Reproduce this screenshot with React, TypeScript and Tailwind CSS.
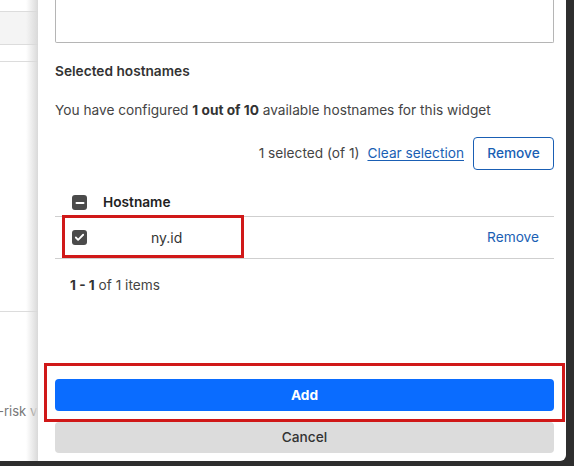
import { Check, Minus } from 'lucide-react'

function Box({ checked }: { checked: boolean }) {
  return (
    <span className="flex h-[15px] w-[15px] items-center justify-center rounded-[3px] bg-[#4b4b4b]">
      {checked ? (
        <Check className="h-[11px] w-[11px] text-white" strokeWidth={4} />
      ) : (
        <Minus className="h-[12px] w-[12px] text-white" strokeWidth={4} />
      )}
    </span>
  )
}

export default function App() {
  return (
    <div
      className="flex h-[466px] w-[574px] flex-col overflow-hidden bg-[#2e2e2e] text-[13.7px] text-[#333]"
      style={{ fontFamily: 'Inter, "Noto Sans", sans-serif' }}
    >
      <div className="flex h-[461px]">
        {/* page behind the drawer */}
        <div className="relative flex w-[38px] flex-col bg-white">
          <div className="mt-[11px] h-[34px] border-y border-[#dcdcdc] bg-[#f4f4f4]" />
          <div className="mt-[16px] border-t border-[#dcdcdc]" />
          <div className="mt-[249px] border-t border-[#dcdcdc]" />
          <div className="mt-[90px] whitespace-nowrap text-[13px] text-[#777] -ml-[2px]">-risk v</div>
          <div className="absolute inset-y-0 right-0 w-[12px] bg-gradient-to-r from-transparent to-[#d9d9d9]" />
        </div>

        {/* drawer */}
        <div className="relative flex w-[528px] flex-col rounded-br-[6px] bg-white pl-[17px] pr-[12px]">
          <div className="h-[43px] rounded-b-[2px] border-x border-b border-[#b5b5b5]" />

          <div className="mt-[18px] font-semibold text-[#333]">Selected hostnames</div>

          <p className="mt-[18px] text-[#444]">
            You have configured <span className="font-bold text-[#333]">1 out of 10</span> available hostnames for this widget
          </p>

          <div className="mt-[17px] flex items-center justify-end gap-[8px]">
            <span className="text-[#444]">1 selected (of 1)</span>
            <span className="mr-[1px] text-[#1a5fb4] underline underline-offset-2">Clear selection</span>
            <button className="h-[33px] w-[81px] rounded-[4px] border border-[#1a5fb4] font-medium text-[#1a5fb4]">
              Remove
            </button>
          </div>

          <div className="mt-[24px] flex h-[23px] items-center border-b border-[#cfcfcf] pb-[5px] pl-[17px]">
            <Box checked={false} />
            <span className="ml-[16px] font-semibold text-[#222]">Hostname</span>
          </div>

          <div className="flex h-[42px] items-center border-b border-[#cfcfcf] pl-[17px] pr-[15px]">
            <Box checked={true} />
            <span className="ml-[64px] text-[14px] text-[#333]">ny.id</span>
            <span className="ml-auto text-[#1a5fb4]">Remove</span>
          </div>

          <div className="mt-[16px] pl-[15px] text-[#444]">
            <span className="font-bold text-[#333]">1 - 1</span> of 1 items
          </div>

          <div className="mt-auto mb-[8px] flex flex-col gap-[11px]">
            <button className="h-[32px] w-full rounded-[4px] bg-[#0a6cff] font-bold text-white">Add</button>
            <button className="h-[31px] w-full rounded-[4px] bg-[#dcdcdc] font-medium text-[#333]">Cancel</button>
          </div>

          {/* annotation boxes */}
          <div className="pointer-events-none absolute left-[24px] top-[215px] h-[43px] w-[182px] border-[3px] border-[#d01818]" />
          <div className="pointer-events-none absolute left-[6px] top-[363px] h-[59px] w-[521px] border-[3px] border-[#d01818]" />
        </div>
        <div className="w-[8px] bg-[#2e2e2e]" />
      </div>
    </div>
  )
}
